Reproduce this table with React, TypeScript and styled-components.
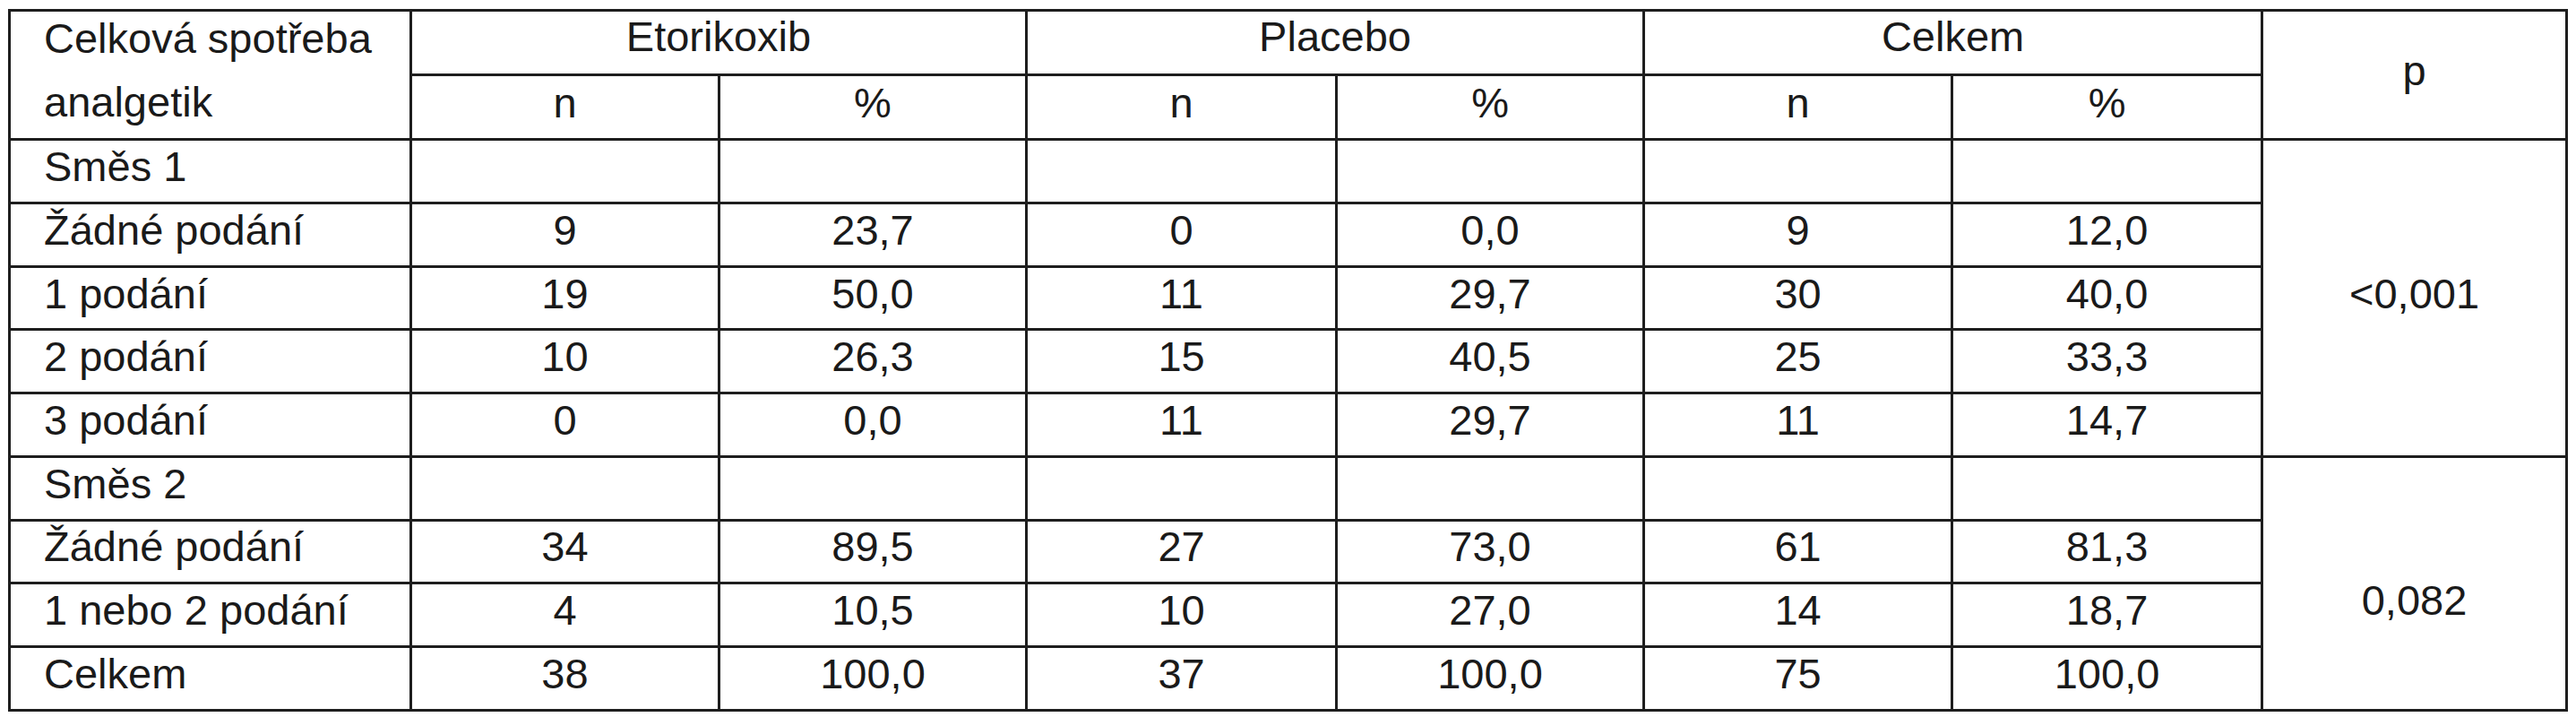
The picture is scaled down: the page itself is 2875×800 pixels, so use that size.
import styled, { createGlobalStyle } from 'styled-components'

interface DataRow {
  label: string
  values: string[] // n, %, n, %, n, %
}

interface Group {
  title: string
  p: string
  pOffset: number // p text sits a bit lower in some groups
  rows: DataRow[]
}

const groups: Group[] = [
  {
    title: 'Směs 1',
    p: '<0,001',
    pOffset: 0,
    rows: [
      { label: 'Žádné podání', values: ['9', '23,7', '0', '0,0', '9', '12,0'] },
      { label: '1 podání', values: ['19', '50,0', '11', '29,7', '30', '40,0'] },
      { label: '2 podání', values: ['10', '26,3', '15', '40,5', '25', '33,3'] },
      { label: '3 podání', values: ['0', '0,0', '11', '29,7', '11', '14,7'] },
    ],
  },
  {
    title: 'Směs 2',
    p: '0,082',
    pOffset: 48,
    rows: [
      { label: 'Žádné podání', values: ['34', '89,5', '27', '73,0', '61', '81,3'] },
      { label: '1 nebo 2 podání', values: ['4', '10,5', '10', '27,0', '14', '18,7'] },
      { label: 'Celkem', values: ['38', '100,0', '37', '100,0', '75', '100,0'] },
    ],
  },
]

const colWidths = [448, 344, 343, 346, 343, 344, 346, 340]
const ROW = 70.7

const App = () => {
  return (
    <>
      <GlobalStyle />
      <Page>
        <Table>
          <colgroup>
            {colWidths.map((w, i) => (
              <col key={i} style={{ width: w }} />
            ))}
          </colgroup>
          <thead>
            <Row>
              <LabelHead rowSpan={2}>
                <HeadLine>Celková spotřeba</HeadLine>
                <HeadLine>analgetik</HeadLine>
              </LabelHead>
              <GroupHead colSpan={2}>Etorikoxib</GroupHead>
              <GroupHead colSpan={2}>Placebo</GroupHead>
              <GroupHead colSpan={2}>Celkem</GroupHead>
              <PCell rowSpan={2}>p</PCell>
            </Row>
            <Row>
              {['n', '%', 'n', '%', 'n', '%'].map((h, i) => (
                <ValueCell key={i}>{h}</ValueCell>
              ))}
            </Row>
          </thead>
          <tbody>
            {groups.map((g) => [
              <Row key={g.title}>
                <LabelCell>{g.title}</LabelCell>
                {Array.from({ length: 6 }).map((_, i) => (
                  <ValueCell key={i} />
                ))}
                <PCell rowSpan={g.rows.length + 1} $offset={g.pOffset}>
                  {g.p}
                </PCell>
              </Row>,
              ...g.rows.map((r) => (
                <Row key={g.title + r.label}>
                  <LabelCell>{r.label}</LabelCell>
                  {r.values.map((v, i) => (
                    <ValueCell key={i}>{v}</ValueCell>
                  ))}
                </Row>
              )),
            ])}
          </tbody>
        </Table>
      </Page>
    </>
  )
}

export default App

const GlobalStyle = createGlobalStyle`
  html, body {
    margin: 0;
    padding: 0;
    background: #ffffff;
  }
  body {
    font-family: "Liberation Sans", Arial, Helvetica, sans-serif;
    color: #1a1a1a;
  }
`

const Page = styled.div`
  width: 2875px;
  height: 800px;
  padding: 10px 0 0 9px;
  box-sizing: border-box;
  background: #fff;
`

const Table = styled.table`
  border-collapse: collapse;
  table-layout: fixed;
  width: 2854px;
  font-size: 47px;
  line-height: 52px;

  td,
  th {
    border: 3px solid #1e1e1e;
    padding: 0 0 10px 0;
    font-weight: normal;
    vertical-align: middle;
    white-space: nowrap;
  }
`

const Row = styled.tr`
  height: ${ROW}px;
`

const LabelCell = styled.td`
  text-align: left;
  padding-left: 37px !important;
`

const LabelHead = styled.th`
  text-align: left;
  vertical-align: top !important;
  padding: 0 0 0 37px !important;
`

const HeadLine = styled.span`
  display: block;
  height: ${ROW}px;
  line-height: ${ROW - 10}px;
  padding-bottom: 10px;
  box-sizing: border-box;
`

const GroupHead = styled.th`
  text-align: center;
  padding-bottom: 14px !important;
`

const ValueCell = styled.td`
  text-align: center;
`

const PCell = styled.td<{ $offset?: number }>`
  text-align: center;
  padding-top: ${({ $offset }) => $offset ?? 0}px !important;
`
